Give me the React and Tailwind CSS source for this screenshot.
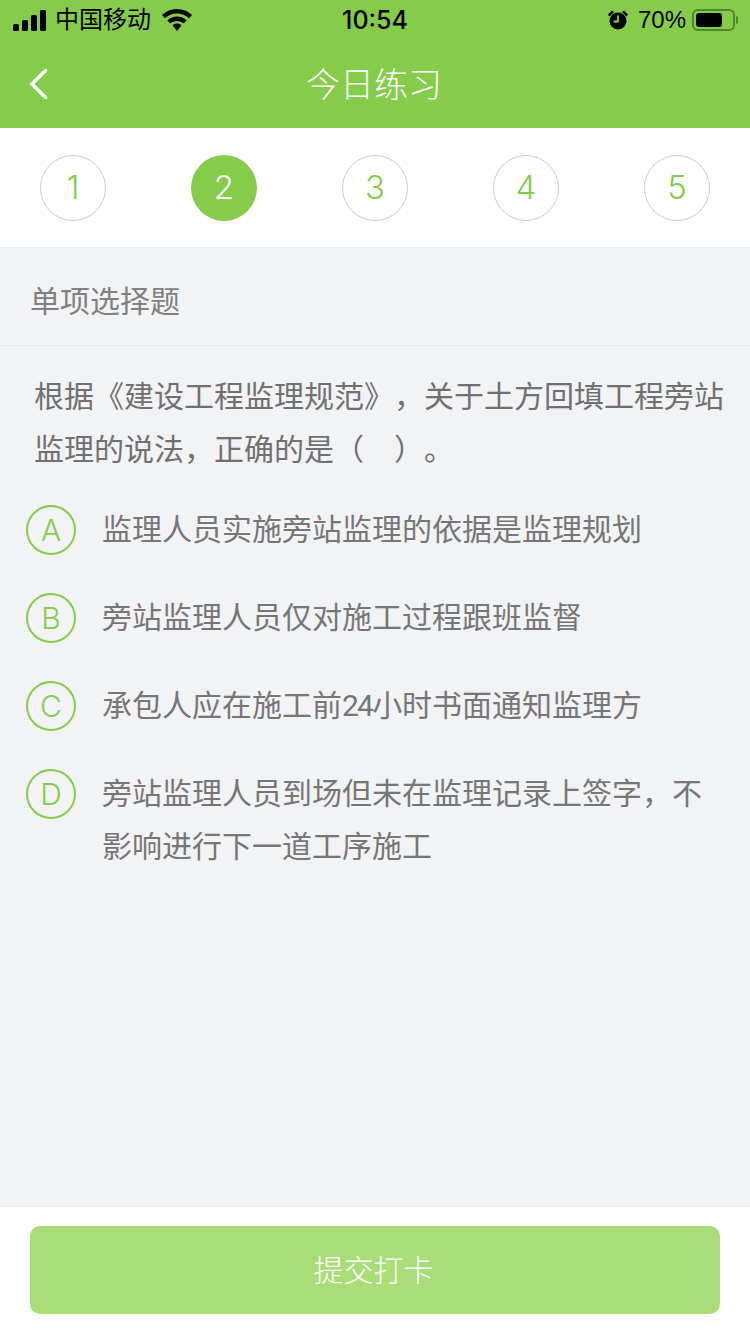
const steps = [1, 2, 3, 4, 5];

const options = [
  { key: 'A', text: '监理人员实施旁站监理的依据是监理规划' },
  { key: 'B', text: '旁站监理人员仅对施工过程跟班监督' },
  {
    key: 'C',
    text: (
      <>
        承包人应在施工前
        <span className="font-['Roboto',sans-serif] font-normal tracking-[-1.8px]">24</span>
        小时书面通知监理方
      </>
    ),
  },
  { key: 'D', text: '旁站监理人员到场但未在监理记录上签字，不影响进行下一道工序施工' },
];

function StatusBar() {
  return (
    <div className="flex h-10 items-center justify-between pl-[13px] pr-[12px] text-black">
      <div className="flex w-[250px] items-center">
        <svg width="35" height="21" viewBox="0 0 35 21" fill="#000">
          <rect x="0" y="14" width="6" height="7" rx="1.500" />
          <rect x="9" y="10" width="6" height="11" rx="1.500" />
          <rect x="18" y="5" width="6" height="16" rx="1.500" />
          <rect x="27" y="0" width="6" height="21" rx="1.500" />
        </svg>
        <span className="ml-[7px] text-[24px] leading-none">中国移动</span>
        <svg className="ml-[11px]" width="30" height="22" viewBox="0 0 30 22" fill="#000">
          <path d="M15 0C9.300 0 4 2.200 0 6L3 9.300C6.200 6.300 10.400 4.500 15 4.500S23.800 6.300 27 9.300L30 6C26 2.200 20.700 0 15 0Z" />
          <path d="M15 7.500C11.300 7.500 8 8.900 5.300 11.300L8.300 14.500C10.100 12.900 12.400 12 15 12S19.900 12.900 21.700 14.500L24.700 11.300C22 8.900 18.700 7.500 15 7.500Z" />
          <path d="M15 14.500C13.300 14.500 11.700 15.100 10.500 16.200L15 22L19.500 16.200C18.300 15.100 16.700 14.500 15 14.500Z" />
        </svg>
      </div>
      <span className="mt-[1px] mr-[1px] text-[25px] font-medium leading-none">10:54</span>
      <div className="flex w-[250px] items-center justify-end">
        <svg width="22" height="22" viewBox="0 0 22 22" fill="#000">
          <circle cx="11" cy="12" r="8.500" />
          <path d="M1 5.500L5 1.500L7 3L2.500 7.500ZM21 5.500L17 1.500L15 3L19.500 7.500Z" />
          <path d="M11 6.500V12.500H6.500" fill="none" stroke="#86cc4b" strokeWidth="1.800" />
        </svg>
        <span className="ml-[9px] font-['Liberation_Sans',sans-serif] text-[24px] leading-none">70%</span>
        <div className="ml-[6px] flex items-center">
          <div className="h-[22px] w-[43px] rounded-[6px] border-2 border-[#4e8a28] p-[2px]">
            <div className="h-full w-[26px] rounded-[3px] bg-black" />
          </div>
          <div className="ml-[1px] h-[8px] w-[2px] rounded-r bg-[#4e8a28]" />
        </div>
      </div>
    </div>
  );
}

export default function App() {
  return (
    <div className="flex h-[1334px] w-[750px] flex-col overflow-hidden bg-[#f2f3f5] font-['Inter','Noto_Sans_CJK_SC',sans-serif] [text-spacing-trim:space-all]">
      <div className="h-[128px] bg-[#86cc4b]">
        <StatusBar />
        <div className="relative flex h-[88px] items-center justify-center pr-[2px] pt-[1px]">
          <svg className="absolute left-[29px] top-[28px]" width="20" height="32" viewBox="0 0 20 32" fill="none" stroke="#fff" strokeWidth="3.500" strokeLinecap="round">
            <path d="M16.500 2.500L3 16L16.500 29.500" />
          </svg>
          <span className="text-[34px] font-light leading-none text-white">今日练习</span>
        </div>
      </div>

      <div className="flex h-[120px] items-center justify-between border-b border-[#e8e9eb] bg-white px-10">
        {steps.map((n) => (
          <div
            key={n}
            className={
              n === 2
                ? 'flex h-[66px] w-[66px] items-center justify-center rounded-full bg-[#86cc4b] text-[33px] font-light text-white'
                : 'flex h-[66px] w-[66px] items-center justify-center rounded-full border border-[#cccccc] text-[33px] font-light text-[#86cc4b]'
            }
          >
            {n}
          </div>
        ))}
      </div>

      <div className="flex h-[98px] items-center border-b border-[#e8e9eb] pl-[30px] pt-[10px] text-[30px] text-[#808080]">
        单项选择题
      </div>

      <div className="pl-[34px] pr-[20px] pt-[24px] text-[30px] leading-[53px] text-[#707070]">
        根据《建设工程监理规范》，关于土方回填工程旁站监理的说法，正确的是（　）。
      </div>

      <div className="mt-[27px] flex flex-col gap-[35px] pl-[26px] pr-[46px]">
        {options.map((o) => (
          <div key={o.key} className="flex items-start">
            <div className="mt-[2px] flex h-[50px] w-[50px] shrink-0 items-center justify-center rounded-full border-2 border-[#86cc4b] text-[30px] font-light text-[#86cc4b]">
              {o.key}
            </div>
            <div className="ml-[26px] text-[30px] leading-[53px] text-[#767676]">{o.text}</div>
          </div>
        ))}
      </div>

      <div className="mt-auto flex h-[128px] items-start border-t border-[#e8e9eb] bg-white px-[30px] pt-[19px]">
        <div className="flex h-[88px] w-full items-center justify-center rounded-[10px] bg-[#a9dd78] pr-[3px] text-[30px] font-light text-white">
          提交打卡
        </div>
      </div>
    </div>
  );
}
